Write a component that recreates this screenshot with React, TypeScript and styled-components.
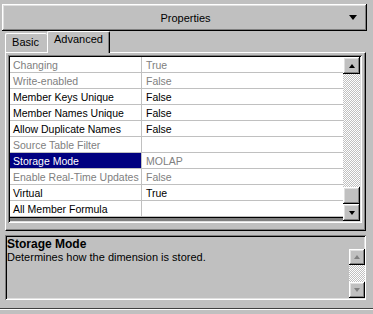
import React from 'react';
import styled, { createGlobalStyle, css } from 'styled-components';

const Global = createGlobalStyle`
  html, body { margin: 0; padding: 0; background: #c0c0c0; }
  body { font-family: "Liberation Sans", Arial, sans-serif; font-size: 11px; color: #000; }
`;

const raised = css`
  box-shadow: inset -1px -1px #000, inset 1px 1px #fff, inset -2px -2px #808080, inset 2px 2px #dfdfdf;
`;
const sunken = css`
  box-shadow: inset 1px 1px #808080, inset -1px -1px #fff, inset 2px 2px #000, inset -2px -2px #dfdfdf;
`;
const dither = css`
  background-color: #c0c0c0;
  background-image: repeating-conic-gradient(#c0c0c0 0 25%, #ffffff 0 50%);
  background-size: 2px 2px;
`;

const Window = styled.div`
  width: 373px;
  height: 314px;
  box-sizing: border-box;
  padding: 4px 0 0 2px;
  display: flex;
  flex-direction: column;
  overflow: hidden;
`;

const Header = styled.div`
  width: 365px;
  height: 27px;
  box-sizing: border-box;
  ${raised};
  display: grid;
  grid-template-columns: 1fr auto 1fr;
  align-items: center;
`;

const HeaderTitle = styled.span`
  grid-column: 2;
  font-size: 11px;
  padding-left: 2px;
`;

const HeaderArrowCell = styled.span`
  grid-column: 3;
  justify-self: end;
  margin-right: 10px;
  display: flex;
`;

const Arrow = styled.span<{ $dir: 'up' | 'down'; $w: number; $disabled?: boolean }>`
  width: 0;
  height: 0;
  border-left: ${(p) => p.$w / 2}px solid transparent;
  border-right: ${(p) => p.$w / 2}px solid transparent;
  ${(p) =>
    p.$dir === 'down'
      ? `border-top: ${Math.ceil(p.$w / 2)}px solid ${p.$disabled ? '#808080' : '#000'};`
      : `border-bottom: ${Math.ceil(p.$w / 2)}px solid ${p.$disabled ? '#808080' : '#000'};`}
`;

const TabArea = styled.div`
  margin-left: 3px;
  width: 361px;
  display: flex;
  flex-direction: column;
`;

const TabsRow = styled.div`
  height: 21px;
  display: flex;
  align-items: flex-end;
  position: relative;
  z-index: 1;
`;

const Tab = styled.div<{ $active?: boolean; $w: number }>`
  width: ${(p) => p.$w}px;
  height: ${(p) => (p.$active ? 22 : 19)}px;
  box-sizing: border-box;
  margin-bottom: ${(p) => (p.$active ? -1 : 0)}px;
  background: #c0c0c0;
  border-top: 1px solid #fff;
  border-left: 1px solid #fff;
  border-right: 1px solid #000;
  border-radius: 2px 2px 0 0;
  box-shadow: inset -1px 0 #808080;
  display: flex;
  align-items: flex-start;
  justify-content: center;
  padding-top: ${(p) => (p.$active ? 1 : 2)}px;
  padding-right: ${(p) => (p.$active ? 0 : 2)}px;
  font-size: 11px;
  ${(p) => !p.$active && 'border-right: none; box-shadow: none;'}
`;

const Panel = styled.div`
  width: 361px;
  height: 179px;
  box-sizing: border-box;
  border-top: 1px solid #fff;
  border-left: 1px solid #fff;
  border-right: 1px solid #000;
  border-bottom: 1px solid #000;
  box-shadow: inset -1px -1px #808080;
  padding: 2px 3px 0 2px;
`;

const Grid = styled.div`
  height: 168px;
  box-sizing: border-box;
  ${sunken};
  padding: 2px;
  display: flex;
  background: #fff;
`;

const Rows = styled.div`
  flex: 1;
  display: flex;
  flex-direction: column;
  background: #fff;
  font-size: 10.5px;
`;

const Row = styled.div`
  display: grid;
  grid-template-columns: 132px 1fr;
  height: 16px;
  box-sizing: border-box;
  border-bottom: 1px solid #c0c0c0;
`;

const NameCell = styled.div<{ $disabled?: boolean; $selected?: boolean }>`
  padding-left: 3px;
  line-height: 16px;
  border-right: 1px solid #c0c0c0;
  white-space: nowrap;
  overflow: hidden;
  color: ${(p) => (p.$selected ? '#fff' : p.$disabled ? '#808080' : '#000')};
  background: ${(p) => (p.$selected ? '#000080' : 'transparent')};
`;

const ValueCell = styled.div<{ $disabled?: boolean }>`
  padding-left: 4px;
  line-height: 16px;
  overflow: hidden;
  color: ${(p) => (p.$disabled ? '#808080' : '#000')};
`;

const RowsFoot = styled.div`
  flex: 1;
  background: #808080;
  border-top: 1px solid #000;
`;

const ScrollBar = styled.div<{ $w: number }>`
  width: ${(p) => p.$w}px;
  display: flex;
  flex-direction: column;
  ${dither};
`;

const ScrollButton = styled.div<{ $h: number }>`
  height: ${(p) => p.$h}px;
  flex: none;
  background: #c0c0c0;
  ${raised};
  display: flex;
  align-items: center;
  justify-content: center;
`;

const Track = styled.div`
  flex: 1;
`;

const Description = styled.div`
  margin: 4px 0 0 3px;
  width: 361px;
  height: 65px;
  box-sizing: border-box;
  ${sunken};
  padding: 2px 1px 2px 2px;
  display: flex;
`;

const DescText = styled.div`
  flex: 1;
  line-height: 13px;
  padding-top: 1px;
`;

const DescTitle = styled.div`
  font-weight: bold;
  font-size: 12px;
`;

const DescScroll = styled(ScrollBar)`
  align-self: flex-end;
  height: 49px;
`;

const BottomEdge = styled.div`
  margin-top: 8px;
  margin-left: -2px;
  height: 1px;
  background: #404040;
  border-bottom: 1px solid #fff;
`;

type Prop = { name: string; value: string; disabled?: boolean; selected?: boolean; valueDisabled?: boolean };

const props: Prop[] = [
  { name: 'Changing', value: 'True', disabled: true },
  { name: 'Write-enabled', value: 'False', disabled: true },
  { name: 'Member Keys Unique', value: 'False' },
  { name: 'Member Names Unique', value: 'False' },
  { name: 'Allow Duplicate Names', value: 'False' },
  { name: 'Source Table Filter', value: '', disabled: true },
  { name: 'Storage Mode', value: 'MOLAP', selected: true, valueDisabled: true },
  { name: 'Enable Real-Time Updates', value: 'False', disabled: true },
  { name: 'Virtual', value: 'True' },
  { name: 'All Member Formula', value: '' },
];

export default function App() {
  return (
    <>
      <Global />
      <Window>
        <Header>
          <HeaderTitle>Properties</HeaderTitle>
          <HeaderArrowCell>
            <Arrow $dir="down" $w={9} />
          </HeaderArrowCell>
        </Header>
        <TabArea>
          <TabsRow>
            <Tab $w={42}>Basic</Tab>
            <Tab $w={63} $active>
              Advanced
            </Tab>
          </TabsRow>
          <Panel>
            <Grid>
              <Rows>
                {props.map((p) => (
                  <Row key={p.name}>
                    <NameCell $disabled={p.disabled} $selected={p.selected}>
                      {p.name}
                    </NameCell>
                    <ValueCell $disabled={p.disabled || p.valueDisabled}>{p.value}</ValueCell>
                  </Row>
                ))}
                <RowsFoot />
              </Rows>
              <ScrollBar $w={17}>
                <ScrollButton $h={17}>
                  <Arrow $dir="up" $w={7} />
                </ScrollButton>
                <Track />
                <ScrollButton $h={17} />
                <ScrollButton $h={17}>
                  <Arrow $dir="down" $w={7} />
                </ScrollButton>
              </ScrollBar>
            </Grid>
          </Panel>
        </TabArea>
        <Description>
          <DescText>
            <DescTitle>Storage Mode</DescTitle>
            Determines how the dimension is stored.
          </DescText>
          <DescScroll $w={16}>
            <ScrollButton $h={16}>
              <Arrow $dir="up" $w={7} $disabled />
            </ScrollButton>
            <Track />
            <ScrollButton $h={16}>
              <Arrow $dir="down" $w={7} $disabled />
            </ScrollButton>
          </DescScroll>
        </Description>
        <BottomEdge />
      </Window>
    </>
  );
}
